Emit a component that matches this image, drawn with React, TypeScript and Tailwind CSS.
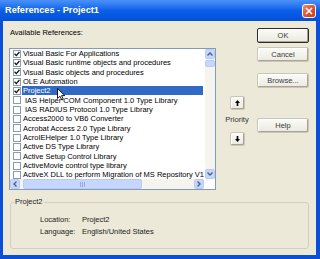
import React from 'react';

type Item = { t: string; c?: boolean; sel?: boolean; ind?: boolean };

const items: Item[] = [
  { t: 'Visual Basic For Applications', c: true },
  { t: 'Visual Basic runtime objects and procedures', c: true },
  { t: 'Visual Basic objects and procedures', c: true },
  { t: 'OLE Automation', c: true },
  { t: 'Project2', c: true, sel: true },
  { t: 'IAS Helper COM Component 1.0 Type Library', ind: true },
  { t: 'IAS RADIUS Protocol 1.0 Type Library', ind: true },
  { t: 'Access2000 to VB6 Converter' },
  { t: 'Acrobat Access 2.0 Type Library' },
  { t: 'AcroIEHelper 1.0 Type Library' },
  { t: 'Active DS Type Library' },
  { t: 'Active Setup Control Library' },
  { t: 'ActiveMovie control type library' },
  { t: 'ActiveX DLL to perform Migration of MS Repository V1 Objects' },
];

function Check({ on }: { on?: boolean }) {
  return (
    <span className="w-[8px] h-[8px] border border-[#8a9db0] bg-white flex items-center justify-center shrink-0">
      {on && (
        <svg width="6" height="6" viewBox="0 0 6 6">
          <path d="M0.6 2.8 L2.3 4.6 L5.4 1" stroke="#111" strokeWidth="1.3" fill="none" />
        </svg>
      )}
    </span>
  );
}

function Btn({ label, def, className = '' }: { label: string; def?: boolean; className?: string }) {
  return (
    <div
      className={`h-[15px] w-[52px] rounded-[2px] border ${
        def ? 'border-[#2b2b2b]' : 'border-[#c9c6b6]'
      } bg-gradient-to-b from-[#fbfbf8] to-[#ebe9e0] shadow-[inset_-1px_-1px_0_#a8a594,inset_1px_1px_0_#ffffff] flex items-center justify-center text-[7.5px] text-[#3a3a3a] leading-none ${className}`}
    >
      {label}
    </div>
  );
}

function ArrowBtn({ down, className = '' }: { down?: boolean; className?: string }) {
  return (
    <div
      className={`w-[15px] h-[14px] rounded-[2px] border border-[#c9c6b6] bg-gradient-to-b from-[#fbfbf8] to-[#ebe9e0] shadow-[inset_-1px_-1px_0_#a8a594,inset_1px_1px_0_#ffffff] flex items-center justify-center ${className}`}
    >
      <svg width="5" height="6" viewBox="0 0 5 6" className={down ? 'rotate-180' : ''}>
        <path d="M2.5 0 L5 3 L3.3 3 L3.3 6 L1.7 6 L1.7 3 L0 3 Z" fill="#000" />
      </svg>
    </div>
  );
}

function ScrollArrow({ dir }: { dir: 'up' | 'down' | 'left' | 'right' }) {
  const rot = { up: '', down: 'rotate-180', left: '-rotate-90', right: 'rotate-90' }[dir];
  return (
    <div className="w-[10px] h-[10px] rounded-[2px] border border-[#bccbf3] bg-[#c6d6fc] flex items-center justify-center shrink-0">
      <svg width="6" height="4" viewBox="0 0 6 4" className={rot}>
        <path d="M0.5 3.5 L3 1 L5.5 3.5" stroke="#4d6185" strokeWidth="1.4" fill="none" />
      </svg>
    </div>
  );
}

export default function App() {
  return (
    <div className="relative w-[320px] h-[259px] flex flex-col bg-[#0a4fd9] font-['Liberation_Sans',Arial,sans-serif] overflow-hidden">
      {/* title bar */}
      <div className="h-[21px] shrink-0 flex items-center justify-between pl-[5px] pr-[4px] bg-gradient-to-b from-[#4a92f8] via-[#0b5fea] to-[#0450d8]">
        <span className="text-white font-bold text-[9.2px] leading-none">References - Project1</span>
        <div className="w-[14px] h-[14px] rounded-[3px] border border-white bg-gradient-to-br from-[#ec8a6b] via-[#df5431] to-[#c53e1c] flex items-center justify-center">
          <svg width="8" height="8" viewBox="0 0 8 8">
            <path d="M1 1 L7 7 M7 1 L1 7" stroke="#fff" strokeWidth="1.6" />
          </svg>
        </div>
      </div>

      {/* body */}
      <div className="flex-1 ml-[3px] mr-[4px] mb-[4px] bg-[#ece9d8] flex flex-col text-black">
        <div className="flex pt-[7px]">
          {/* list column */}
          <div className="ml-[6px] w-[207px] flex flex-col">
            <div className="h-[20px] pl-[1px] text-[7.5px] leading-[10px]">Available References:</div>
            <div className="h-[142px] border border-[#7f9db9] bg-white flex flex-col">
              <div className="flex flex-1 min-h-0">
                <div className="flex-1 min-w-0 overflow-hidden">
                  {items.map((it, i) => (
                    <div key={i} className="h-[9.33px] flex items-center pl-[3px]">
                      <Check on={it.c} />
                      <span
                        className={`ml-[1px] pl-[1px] text-[7.5px] leading-[9px] whitespace-nowrap ${
                          it.sel ? 'flex-1 mr-[2px] bg-[#316ac5] text-white' : ''
                        } ${it.ind ? 'pl-[3px]' : ''}`}
                      >
                        {it.t}
                      </span>
                    </div>
                  ))}
                </div>
                <div className="w-[10px] bg-[#f5f4ee] flex flex-col justify-between">
                  <div className="flex flex-col">
                    <ScrollArrow dir="up" />
                    <div className="mt-[1px] h-[7px] rounded-[2px] border border-[#bccbf3] bg-[#c6d6fc]" />
                  </div>
                  <ScrollArrow dir="down" />
                </div>
              </div>
              <div className="h-[10px] flex bg-[#f5f4ee]">
                <ScrollArrow dir="left" />
                <div className="flex-1 flex items-center">
                  <div className="ml-[3px] w-[119px] h-[10px] rounded-[2px] border border-[#bccbf3] bg-[#c6d6fc] flex items-center justify-center">
                    <svg width="6" height="5" viewBox="0 0 6 5">
                      <path d="M0.5 0 V5 M2.5 0 V5 M4.5 0 V5" stroke="#93a9e0" strokeWidth="1" />
                    </svg>
                  </div>
                </div>
                <ScrollArrow dir="right" />
                <div className="w-[11px] bg-white" />
              </div>
            </div>
          </div>

          {/* priority column */}
          <div className="w-[41px] flex flex-col items-center pt-[68px] pl-[1px]">
            <ArrowBtn />
            <div className="mt-[5px] text-[7.5px] leading-[10px] text-[#333]">Priority</div>
            <ArrowBtn down className="mt-[7px]" />
          </div>

          {/* buttons */}
          <div className="flex flex-col">
            <Btn label="OK" def />
            <Btn label="Cancel" className="mt-[4px]" />
            <Btn label="Browse..." className="mt-[11px]" />
            <Btn label="Help" className="mt-[30px]" />
          </div>
        </div>

        <fieldset className="mt-[7px] ml-[7px] w-[299px] border border-[#d0d0bf] rounded-[3px] pb-[11px] text-[7.5px] leading-[10px] text-[#222]">
          <legend className="ml-[3px] px-[1px]">Project2</legend>
          <div className="pl-[29px] pt-[8px] flex">
            <span className="w-[42px]">Location:</span>
            <span>Project2</span>
          </div>
          <div className="pl-[29px] mt-[2px] flex">
            <span className="w-[42px]">Language:</span>
            <span>English/United States</span>
          </div>
        </fieldset>
      </div>

      {/* mouse cursor */}
      <svg className="absolute left-[57px] top-[88px]" width="9" height="13" viewBox="0 0 9 13">
        <path d="M0.5 0.5 L0.5 10.5 L3 8.2 L4.8 12 L6.3 11.3 L4.6 7.6 L7.8 7.6 Z" fill="#fff" stroke="#000" strokeWidth="0.9" />
      </svg>
    </div>
  );
}
